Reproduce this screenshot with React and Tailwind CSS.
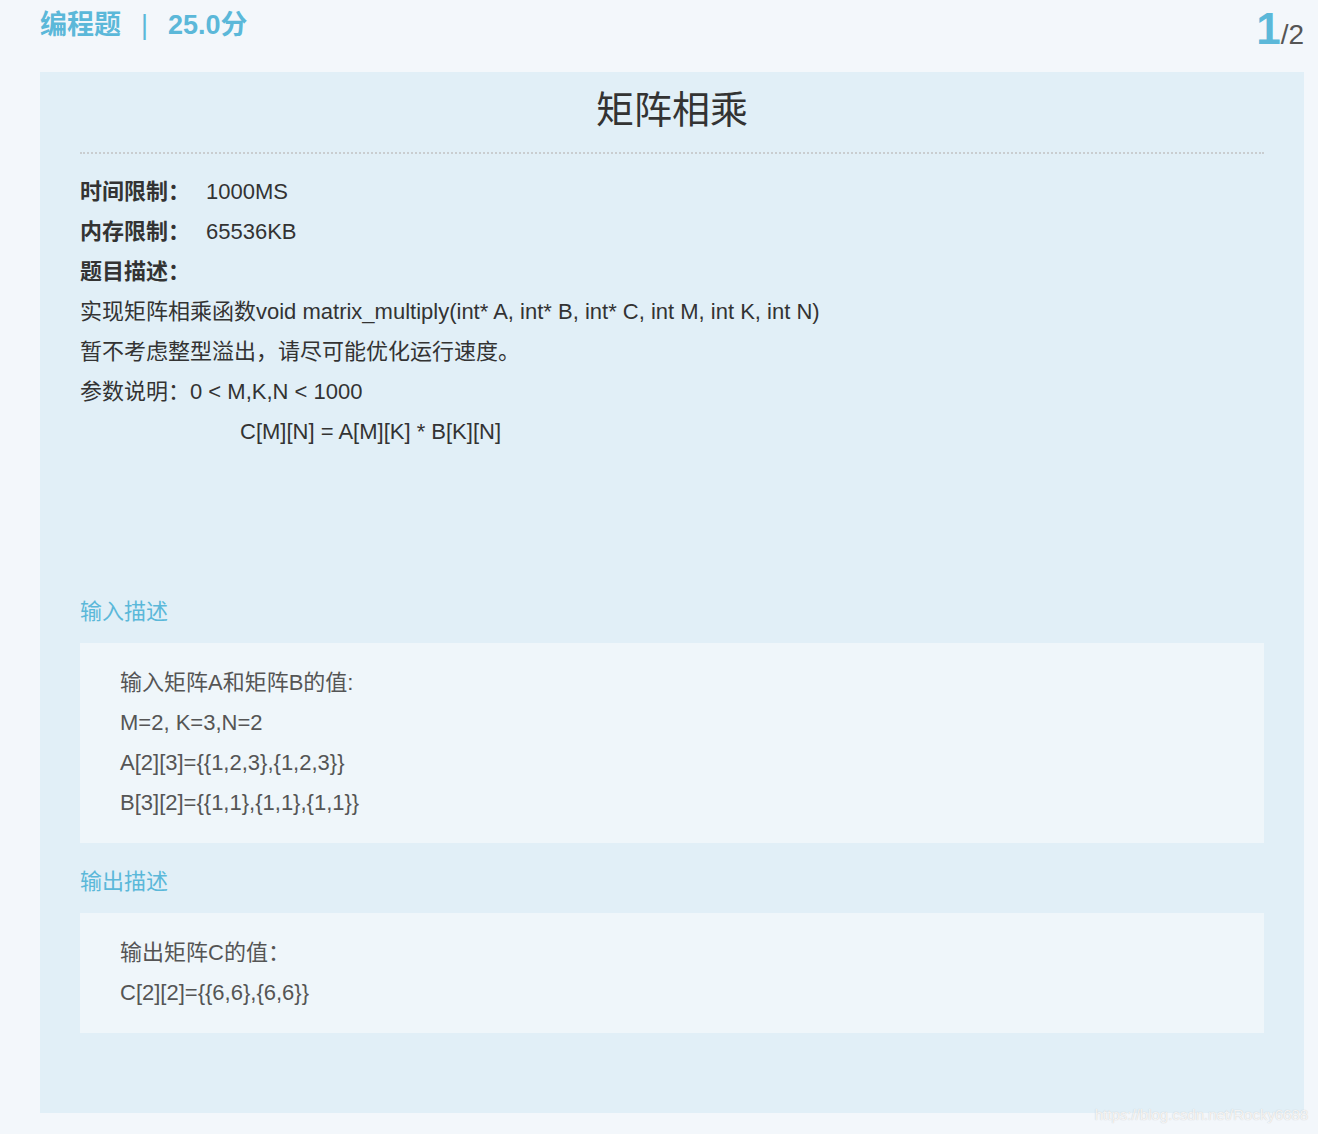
import React from "react";

const font = { fontFamily: '"Liberation Sans", "Noto Sans CJK SC", sans-serif' };

function Section({title, lines}) {
  return (
    <div>
      <div className="text-[22px] leading-[40px] text-[#5bb8d9]">{title}</div>
      <div className="mt-[11px] bg-[#eff6fa] px-10 py-5 text-[22px] leading-[40px] text-[#555]">
        {lines.map((l, i) => (
          <div key={i}>{l}</div>
        ))}
      </div>
    </div>
  );
}

export default function App() {
  return (
    <div className="w-[1318px] h-[1134px] bg-[#f3f7fb] relative" style={font}>
      {/* header */}
      <div className="h-[72px] flex items-start justify-between pl-10 pr-[14px]">
        <div className="mt-[6px] text-[27px] leading-[38px] font-bold text-[#5bb8d9] flex items-center">
          <span>编程题</span>
          <span className="mx-[20px] font-normal">|</span>
          <span>25.0分</span>
        </div>
        <div className="mt-[4px] flex items-end leading-[1.15]">
          <span className="text-[44px] font-bold text-[#5bb8d9]">1</span>
          <span className="text-[28px] text-[#555] mb-[3px]">/2</span>
        </div>
      </div>

      {/* card */}
      <div className="ml-10 mr-[14px] bg-[#e1eff7] px-10 pt-[14px] pb-20">
        <div className="text-center text-[38px] leading-[48px] text-[#333]">矩阵相乘</div>
        <div className="mt-[18px] border-t-2 border-dotted border-[#c9cdd0]"></div>
        <div className="mt-[18px] text-[22px] leading-[40px] text-[#333]">
          <div><span className="font-bold">时间限制：</span><span className="ml-[16px]">1000MS</span></div>
          <div><span className="font-bold">内存限制：</span><span className="ml-[16px]">65536KB</span></div>
          <div className="font-bold">题目描述：</div>
          <div>实现矩阵相乘函数void matrix_multiply(int* A, int* B, int* C, int M, int K, int N)</div>
          <div>暂不考虑整型溢出，请尽可能优化运行速度。</div>
          <div>参数说明：0 &lt; M,K,N &lt; 1000</div>
          <div className="pl-40">C[M][N] = A[M][K] * B[K][N]</div>
        </div>
        <div className="mt-[140px]">
          <Section
            title="输入描述"
            lines={["输入矩阵A和矩阵B的值:", "M=2, K=3,N=2", "A[2][3]={{1,2,3},{1,2,3}}", "B[3][2]={{1,1},{1,1},{1,1}}"]}
          />
        </div>
        <div className="mt-[19px]">
          <Section title="输出描述" lines={["输出矩阵C的值：", "C[2][2]={{6,6},{6,6}}"]} />
        </div>
      </div>
      <div className="absolute right-[10px] bottom-[8px] text-[15px] text-white/80" style={{textShadow: "0 0 1px #bbb"}}>
        https://blog.csdn.net/Rocky6688
      </div>
    </div>
  );
}
